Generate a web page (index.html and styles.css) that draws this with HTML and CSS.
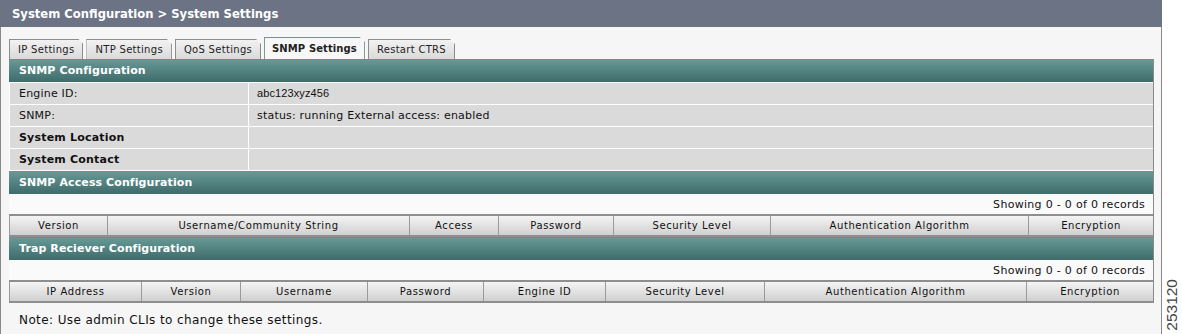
FILE: index.html
```html
<!DOCTYPE html>
<html>
<head>
<meta charset="utf-8">
<link rel="stylesheet" href="styles.css">
</head>
<body>
<div class="page">
  <div class="main">
    <div class="titlebar">System Configuration &gt; System Settings</div>
    <div class="panel">
      <div class="tabs">
        <div class="tab">IP Settings</div>
        <div class="tab">NTP Settings</div>
        <div class="tab">QoS Settings</div>
        <div class="tab active">SNMP Settings</div>
        <div class="tab">Restart CTRS</div>
      </div>
      <div class="box">
        <div class="sechead">SNMP Configuration</div>
        <div class="kv">
          <div class="k">Engine ID:</div><div class="v small">abc123xyz456</div>
          <div class="k">SNMP:</div><div class="v">status: running External access: enabled</div>
          <div class="k b">System Location</div><div class="v"></div>
          <div class="k b">System Contact</div><div class="v"></div>
        </div>
        <div class="sechead">SNMP Access Configuration</div>
        <div class="showing">Showing 0 - 0 of 0 records</div>
        <div class="thead access">
          <div class="th">Version</div>
          <div class="th">Username/Community String</div>
          <div class="th">Access</div>
          <div class="th">Password</div>
          <div class="th">Security Level</div>
          <div class="th">Authentication Algorithm</div>
          <div class="th">Encryption</div>
        </div>
        <div class="sechead">Trap Reciever Configuration</div>
        <div class="showing">Showing 0 - 0 of 0 records</div>
        <div class="thead trap">
          <div class="th">IP Address</div>
          <div class="th">Version</div>
          <div class="th">Username</div>
          <div class="th">Password</div>
          <div class="th">Engine ID</div>
          <div class="th">Security Level</div>
          <div class="th">Authentication Algorithm</div>
          <div class="th">Encryption</div>
        </div>
      </div>
      <div class="note">Note: Use admin CLIs to change these settings.</div>
    </div>
  </div>
  <div class="side"><span class="figno">253120</span></div>
</div>
</body>
</html>
```
FILE: styles.css
```css
html, body {
  margin: 0;
  padding: 0;
  background: #ffffff;
}
body {
  font-family: "DejaVu Sans", Verdana, sans-serif;
  color: #111;
}
.page {
  display: flex;
  width: 1182px;
  height: 334px;
  overflow: hidden;
}
.main {
  width: 1162px;
  display: flex;
  flex-direction: column;
}
.titlebar {
  height: 27px;
  background: #6b7385;
  color: #ffffff;
  font-weight: bold;
  font-size: 11.6px;
  line-height: 28px;
  padding-left: 12px;
  box-sizing: border-box;
}
.panel {
  flex: 1;
  background: #f6f6f6;
  border-left: 1px solid #8a8a8a;
  border-right: 1px solid #8a8a8a;
  padding: 10px 8px 0 8px;
  display: flex;
  flex-direction: column;
}
.tabs {
  display: flex;
  align-items: flex-end;
  height: 22px;
  gap: 3px;
}
.tab {
  height: 19px;
  line-height: 19px;
  font-size: 10px;
  padding: 0 8px;
  border: 1px solid #8c8c8c;
  border-bottom: none;
  background: linear-gradient(#f2f2f2, #d9d9d9);
  clip-path: polygon(0 0, calc(100% - 5px) 0, 100% 5px, 100% 100%, 0 100%);
  color: #222;
  letter-spacing: 0.3px;
}
.tab.active {
  height: 21px;
  line-height: 22px;
  font-weight: bold;
  background: #f7f7f7;
  border-color: #7a8f94;
  padding: 0 7px;
  font-size: 10px;
  letter-spacing: 0.1px;
}
.box {
  width: 1144px;
  border-right: 1px solid #8a8a8a;
}
.sechead {
  height: 23px;
  line-height: 22px;
  background: linear-gradient(#669996, #3e6b6b);
  border-top: 1px solid #858585;
  color: #ffffff;
  font-weight: bold;
  font-size: 11px;
  padding-left: 10px;
  box-sizing: border-box;
  letter-spacing: 0.1px;
}
.kv {
  display: grid;
  grid-template-columns: 238px 1fr;
  background: #ffffff;
  border-left: 1px solid #ffffff;
  gap: 1px 1px;
  padding: 1px 0 1px 0;
}
.k, .v {
  height: 21px;
  line-height: 21px;
  background: #dadada;
  font-size: 11px;
  padding-left: 9px;
  letter-spacing: 0.2px;
}
.k.b {
  font-weight: bold;
}
.v {
  padding-left: 8px;
}
.v.small {
  font-family: "Liberation Sans", Arial, sans-serif;
  font-size: 11px;
  letter-spacing: 0.1px;
}
.showing {
  height: 20px;
  line-height: 21px;
  background: #fafafa;
  text-align: right;
  font-size: 11px;
  padding-right: 8px;
  letter-spacing: 0.3px;
}
.thead {
  display: grid;
  height: 23px;
  border-top: 2px solid #8e8e8e;
  border-bottom: 2px solid #8e8e8e;
  box-sizing: border-box;
  background: linear-gradient(#f4f4f4, #d0d0d0);
}
.thead.access {
  grid-template-columns: 98px 302px 89px 115px 157px 258px 1fr;
}
.thead.trap {
  grid-template-columns: 132px 99px 127px 116px 122px 159px 262px 1fr;
}
.th {
  font-size: 10px;
  line-height: 19px;
  text-align: center;
  border-left: 1px solid #9a9a9a;
  letter-spacing: 0.6px;
}
.note {
  margin-top: 10px;
  padding-left: 10px;
  font-size: 12px;
  color: #111;
  letter-spacing: 0.4px;
}
.side {
  flex: 1;
  display: flex;
  align-items: flex-end;
  justify-content: center;
  padding-bottom: 3px;
}
.figno {
  writing-mode: vertical-rl;
  transform: rotate(180deg);
  font-family: "Liberation Sans", Arial, sans-serif;
  font-size: 15.5px;
  color: #444;
}
```
